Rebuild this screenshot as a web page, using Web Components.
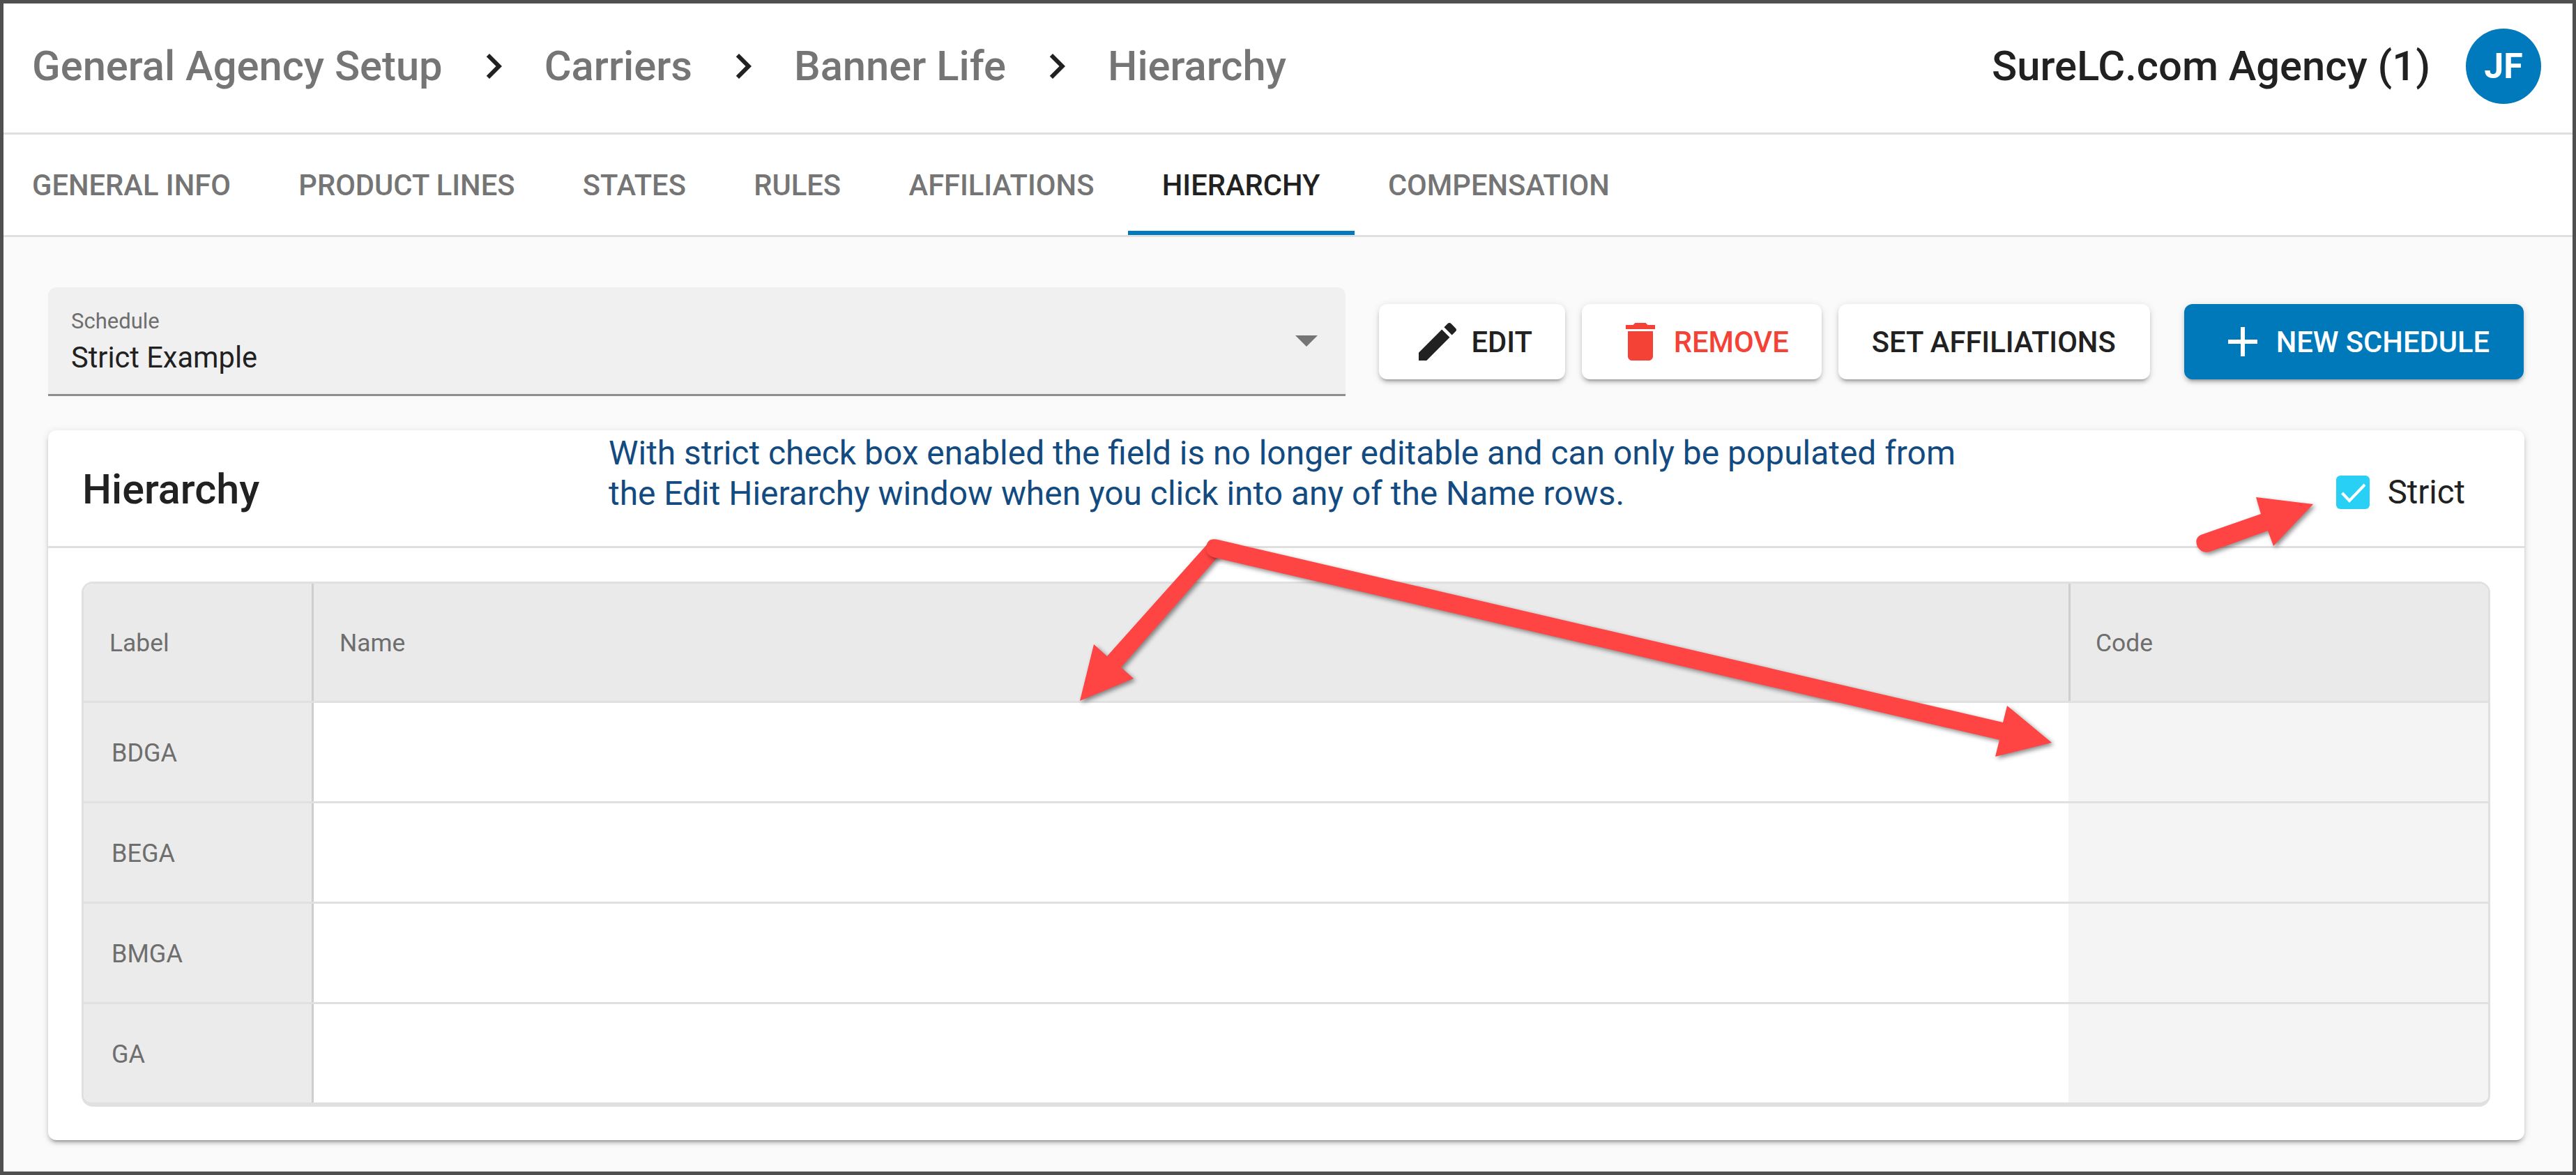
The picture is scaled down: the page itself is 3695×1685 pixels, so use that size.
<!doctype html>
<html lang="en"><head><meta charset="utf-8"><title>Hierarchy</title>
<style>html,body{margin:0;padding:0;background:#fff}body{font-family:Roboto,"Liberation Sans",sans-serif;color:#212121}</style>
</head><body>
<app-page>
  <app-header slot="header">
    <crumb-trail slot="crumbs">
      <span>General Agency Setup</span><span>Carriers</span><span>Banner Life</span><span>Hierarchy</span>
    </crumb-trail>
    <span slot="agency">SureLC.com Agency (1)</span>
    <user-avatar slot="avatar">JF</user-avatar>
  </app-header>
  <tab-bar slot="tabs">
    <tab-item>GENERAL INFO</tab-item>
    <tab-item>PRODUCT LINES</tab-item>
    <tab-item>STATES</tab-item>
    <tab-item>RULES</tab-item>
    <tab-item>AFFILIATIONS</tab-item>
    <tab-item active>HIERARCHY</tab-item>
    <tab-item>COMPENSATION</tab-item>
  </tab-bar>
  <tool-row>
    <select-field label="Schedule" value="Strict Example"></select-field>
    <action-button icon="edit">EDIT</action-button>
    <action-button icon="delete" tone="danger">REMOVE</action-button>
    <action-button wide>SET AFFILIATIONS</action-button>
    <action-button icon="add" tone="primary" wide>NEW SCHEDULE</action-button>
  </tool-row>
  <hierarchy-card>
    <span slot="title">Hierarchy</span>
    <span slot="note">With strict check box enabled the field is no longer editable and can only be populated from<br>the Edit Hierarchy window when you click into any of the Name rows.</span>
    <check-box slot="action">Strict</check-box>
    <hierarchy-grid>
      <grid-row head label="Label" name="Name" code="Code"></grid-row>
      <grid-row label="BDGA"></grid-row>
      <grid-row label="BEGA"></grid-row>
      <grid-row label="BMGA"></grid-row>
      <grid-row label="GA" last></grid-row>
    </hierarchy-grid>
  </hierarchy-card>
  <callout-arrows></callout-arrows>
</app-page>
<script>
const ICONS={
 edit:'M3 17.25V21h3.75L17.81 9.94l-3.75-3.75L3 17.25zM20.71 7.04c.39-.39.39-1.02 0-1.41l-2.34-2.34c-.39-.39-1.02-.39-1.41 0l-1.83 1.83 3.75 3.75 1.83-1.83z',
 delete:'M6 19c0 1.1.9 2 2 2h8c1.1 0 2-.9 2-2V7H6v12zM19 4h-3.5l-1-1h-5l-1 1H5v2h14V4z',
 add:'M19 13h-6v6h-2v-6H5v-2h6V5h2v6h6v2z',
 chevron:'M10 6L8.59 7.41 13.17 12l-4.58 4.59L10 18l6-6z'
};
const svg=(n,c='currentColor')=>`<svg width="72" height="72" viewBox="0 0 24 24" fill="${c}" style="display:block;flex:none"><path d="${ICONS[n]}"/></svg>`;
function def(name,html,Base){
  const t=document.createElement('template');t.innerHTML=html;
  customElements.define(name,class extends (Base||HTMLElement){
    constructor(){super();this.attachShadow({mode:'open'}).appendChild(t.content.cloneNode(true));}
  });
}
def('app-page',`<style>
:host{display:flex;flex-direction:column;position:relative;box-sizing:border-box;width:3695px;height:1685px;border:5px solid #505050;background:#fafafa;overflow:hidden}
main{flex:1;padding:72px 69px 0 64px;display:flex;flex-direction:column}
</style><slot name="header"></slot><slot name="tabs"></slot><main><slot></slot></main>`);

def('app-header',`<style>
:host{display:flex;align-items:center;justify-content:space-between;box-sizing:border-box;height:188px;padding:0 45px 6px 41px;background:#fff;border-bottom:3px solid #e0e0e0}
.r{display:flex;align-items:center;gap:51px;font-size:59.7px;font-weight:500;color:#212121}
</style><slot name="crumbs"></slot><div class="r"><slot name="agency"></slot><slot name="avatar"></slot></div>`);

customElements.define('crumb-trail',class extends HTMLElement{
  constructor(){super();const s=this.attachShadow({mode:'open'});
    s.innerHTML=`<style>:host{display:flex;align-items:center;font-size:59.7px;font-weight:500;color:#757575;line-height:72px}
    ::slotted(span){white-space:nowrap}
    .c{margin:0 37px;color:#212121}</style>`;
    const spans=[...this.children];
    spans.forEach((el,i)=>{const n='p'+i;el.slot=n;const sl=document.createElement('slot');sl.name=n;s.appendChild(sl);
      if(i<spans.length-1){const d=document.createElement('div');d.className='c';d.innerHTML=svg('chevron');s.appendChild(d);}});
  }
});

def('user-avatar',`<style>:host{display:flex;align-items:center;justify-content:center;width:108px;height:108px;border-radius:50%;background:#0079bd;color:#fff;font-size:50px;font-weight:700}</style><slot></slot>`);

def('tab-bar',`<style>:host{display:flex;gap:97.4px;box-sizing:border-box;height:147px;padding-left:41px;background:#fff;border-bottom:3px solid #e0e0e0}</style><slot></slot>`);

customElements.define('tab-item',class extends HTMLElement{
  constructor(){super();this.attachShadow({mode:'open'}).innerHTML=`<style>
  :host{display:flex;align-items:center;position:relative;font-size:41.7px;font-weight:500;color:#757575;white-space:nowrap;height:144px;box-sizing:border-box}
  :host([active]){color:#212121}
  :host([active])::after{content:"";position:absolute;left:-49px;right:-49px;bottom:0;height:6px;background:#0079bd}
  </style><slot></slot>`;}
});

def('tool-row',`<style>:host{display:flex;align-items:center;gap:24px;margin-right:1px}
::slotted(select-field){flex:1;margin-right:24px}
::slotted(action-button:last-of-type){margin-left:25px}
</style><slot></slot>`);

customElements.define('select-field',class extends HTMLElement{
  constructor(){super();this.attachShadow({mode:'open'});}
  connectedCallback(){this.shadowRoot.innerHTML=`<style>
  :host{display:flex;align-items:center;position:relative;box-sizing:border-box;height:156px;padding:0 32px 0 33px;background:#f0f0f0;border-radius:12px 12px 0 0;border-bottom:3px solid #8e8e8e}
  .t{flex:1;padding-top:3px}
  .l{font-size:31px;line-height:37px;color:#6e6e6e;margin-bottom:9px}
  .v{font-size:41.6px;line-height:50px;color:#212121}
  .a{width:0;height:0;border-left:16.5px solid transparent;border-right:16.5px solid transparent;border-top:16.5px solid #757575;margin-right:8px}
  </style><div class="t"><div class="l">${this.getAttribute('label')}</div><div class="v">${this.getAttribute('value')}</div></div><div class="a"></div>`;}
});

customElements.define('action-button',class extends HTMLElement{
  constructor(){super();this.attachShadow({mode:'open'});}
  connectedCallback(){const ic=this.getAttribute('icon');this.shadowRoot.innerHTML=`<style>
  :host{display:flex;align-items:center;box-sizing:border-box;height:108px;padding:0 48px;border-radius:12px;background:#fff;color:#212121;font-size:41.7px;font-weight:500;white-space:nowrap;gap:12px;
    box-shadow:0 7px 3px -5px rgba(0,0,0,.2),0 5px 5px 0 rgba(0,0,0,.14),0 2px 12px 0 rgba(0,0,0,.12)}
  :host([icon]){padding-right:47px}
  :host([wide]){padding-right:49px}
  :host([tone=danger]){color:#f44336}
  :host([tone=primary]){background:#0079bb;color:#fff}
  </style>${ic?`<div class="i">${svg(ic)}</div>`:''}<slot></slot>`;}
});

def('hierarchy-card',`<style>
:host{display:block;margin-top:49px;background:#fff;border-radius:12px;box-shadow:0 7px 3px -5px rgba(0,0,0,.2),0 5px 5px 0 rgba(0,0,0,.14),0 2px 12px 0 rgba(0,0,0,.12)}
header{display:flex;align-items:center;justify-content:space-between;position:relative;box-sizing:border-box;height:169px;padding:2px 85px 0 49px;border-bottom:3px solid #e0e0e0}
.title{font-size:59.3px;font-weight:500;color:#212121}
.note{position:absolute;left:804px;top:4px;font-size:47.9px;line-height:58px;color:#134b80;white-space:nowrap}
.body{padding:48px 49px 48px 48px}
</style><header><div class="title"><slot name="title"></slot></div><div class="note"><slot name="note"></slot></div><slot name="action"></slot></header><div class="body"><slot></slot></div>`);

def('check-box',`<style>
:host{display:flex;align-items:center;gap:26px;font-size:47.3px;color:#212121;margin-top:10px}
.b{width:48px;height:48px;border-radius:6px;background:#29d0f5;flex:none}
svg{display:block}
</style><div class="b"><svg width="48" height="48" viewBox="0 0 48 48"><path d="M8.5 25L19 36L41 13" fill="none" stroke="#fff" stroke-width="4"/></svg></div><slot></slot>`);

def('hierarchy-grid',`<style>
:host{display:block;box-sizing:border-box;border:3px solid #e0e0e0;border-bottom-width:6px;border-radius:16px;overflow:hidden}
</style><slot></slot>`);

customElements.define('grid-row',class extends HTMLElement{
  constructor(){super();this.attachShadow({mode:'open'});}
  connectedCallback(){const a=n=>this.getAttribute(n)||'';this.shadowRoot.innerHTML=`<style>
  :host{display:grid;grid-template-columns:330px 1fr 602px;box-sizing:border-box;height:144px;border-bottom:3px solid #e0e0e0;font-size:36px;color:#6e6e6e}
  :host([head]){height:171px;font-size:35.4px}
  :host([last]){height:141px;border-bottom:0}
  div{display:flex;align-items:center;box-sizing:border-box;padding-top:2px}
  .l{padding-left:40px;background:#ebebeb;border-right:3px solid #cfcfcf}
  :host([head]) .l{padding-left:37px;background:#eaeaea}
  .n{background:#fff;padding-left:37px}
  .c{background:#f4f4f4;padding-left:39px}
  :host([head]) .n{background:#eaeaea}
  :host([head]) .c{background:#eaeaea;border-left:3px solid #cfcfcf;padding-left:36px}
  </style><div class="l">${a('label')}</div><div class="n">${a('name')}</div><div class="c">${a('code')}</div>`;}
});

def('callout-arrows',`<style>
:host{position:absolute;left:-5px;top:-5px;width:3695px;height:1685px;pointer-events:none;display:block}
svg{position:absolute;left:0;top:0}
path{fill:#ff4444;filter:drop-shadow(3px 3px 3px rgba(0,0,0,.45))}
</style><svg width="3695" height="1685" viewBox="0 0 3695 1685">
<path d="M1732 780L1588 941L1569 924L1549 1005L1626 973L1608 957L1750 795Z"/>
<path d="M1745 773.5L2873 1036L2879 1012L2943 1065L2862 1085L2868 1061L1746 800.5Q1730 798 1730 786Q1731 771 1745 773.5Z"/>
<path d="M3157 767L3243 737L3236 713L3318 723L3261 783L3253 761L3170 791Q3158 794 3152 784Q3147 772 3157 767Z"/>
</svg>`);
</script>
</body></html>
